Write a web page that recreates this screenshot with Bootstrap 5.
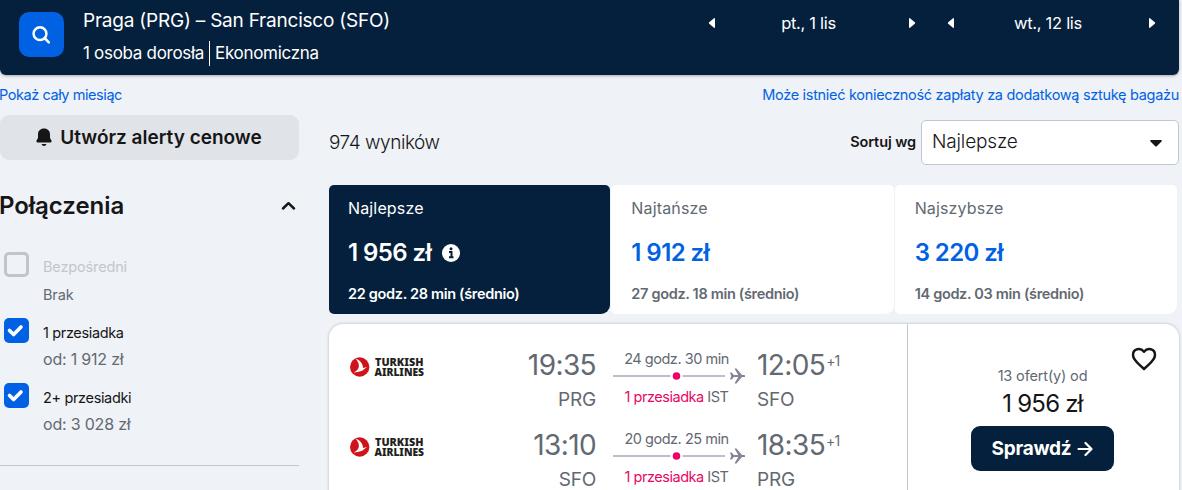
<!DOCTYPE html>
<html lang="pl">
<head>
    <meta charset="UTF-8">
    <meta name="viewport" content="width=device-width, initial-scale=1.0">
    <title>Praga – San Francisco</title>
    <link href="https://cdn.jsdelivr.net/npm/bootstrap@5.3.0/dist/css/bootstrap.min.css" rel="stylesheet">
    <style>
        body {
            background: #eff2f7;
            color: #161616;
            font-family: Inter, 'Liberation Sans', sans-serif;
            overflow: hidden;
        }
        .page {
            width: 1179px;
        }
        svg {
            display: block;
            flex-shrink: 0;
        }
        .line {
            white-space: nowrap;
            line-height: 20px;
        }
        .grey { color: #626971; }
        .blue { color: #0062e3; }

        /* Header */
        .search-bar {
            height: 75px;
            background: #05203c;
            border-radius: 0 0 6px 6px;
            padding: 0 23px 0 19px;
            box-shadow: 0 1px 3px rgba(37, 32, 31, .35);
        }
        .search-btn {
            width: 45px;
            height: 45px;
            margin-top: 12px;
            background: #0062e3;
            border-radius: 10px;
        }
        .search-text { margin-left: 19px; }
        .route { font-size: 19px; letter-spacing: -.22px; margin-top: 11px; }
        .pax { font-size: 17px; letter-spacing: -.3px; height: 26px; line-height: 26px; margin-top: 9px; }
        .pax-sep { width: 1px; height: 25px; background: #fff; margin: 0 5px; }
        .date-nav { width: 208px; height: 22px; margin-top: 12px; font-size: 16.5px; letter-spacing: -.3px; }
        .date-nav .line { margin-right: 7px; }
        .date-nav + .date-nav { width: 209px; margin-left: 31px; }

        .link-row { height: 40px; font-size: 14.5px; letter-spacing: -.3px; }
        .link-month { margin-left: -1px; letter-spacing: -.43px; }

        /* Filters */
        .side { width: 299px; margin-right: 30px; }
        .alert-btn {
            height: 45px;
            padding-right: 1px;
            background: #e0e3e8;
            border-radius: 9px;
            font-size: 19px;
            font-weight: 600;
        }
        .side-title { height: 28px; margin: 32px 0 0 -1px; padding-right: 3px; font-size: 24px; font-weight: 600; letter-spacing: -.05px; }
        .opt { gap: 14px; padding-left: 4px; font-size: 14.5px; letter-spacing: -.35px; }
        .opt + .opt { margin-top: 13px; }
        .opt-text { padding: 5px 0 1px; }
        .box { width: 25px; height: 25px; border-radius: 5px; flex-shrink: 0; }
        .box-off { border: 3px solid #c1c4c9; }
        .box-on { background: #0062e3; }
        .off-text { color: #c1c7cf; }
        .opt-text .off-text, .opt-text .mt-2 { letter-spacing: -.15px; }
        .opt-text .from { font-size: 16px; margin-top: 6px; letter-spacing: -.2px; }
        .side-end { height: 1px; background: #c1c7cf; margin-top: 30px; }

        /* Results */
        .results { width: 850px; }
        .sort-row { padding-top: 5px; }
        .count { font-size: 19px; font-weight: 350; letter-spacing: -.45px; }
        .sort-label { font-size: 14.5px; font-weight: 600; letter-spacing: -.1px; padding-bottom: 2px; }
        .sort-select {
            width: 258px;
            height: 45px;
            margin-left: 5px;
            padding: 0 15px 2px 10px;
            border: 1px solid #c1c7cf;
            border-radius: 5px;
            font-size: 19px;
            font-weight: 350;
            letter-spacing: -.15px;
        }
        .tabs { height: 129px; margin-top: 20px; gap: 1px; padding-right: 2px; }
        .tab { flex: 1 1 0; min-width: 0; padding: 13px 0 0 20px; background: #fff; border-radius: 5px 5px 9px 5px; }
        .tab-on { padding-left: 19px; background: #05203c; color: #fff; }
        .tab-name { font-size: 16px; letter-spacing: .15px; }
        .tab-price { font-size: 24px; font-weight: 600; line-height: 28px; margin-top: 21px; gap: 11px; letter-spacing: -.58px; }
        .tab-price svg { margin-top: -1px; }
        .tab-time { font-size: 14.5px; font-weight: 600; margin-top: 17px; letter-spacing: -.32px; }

        .ticket { height: 190px; margin-top: 10px; background: #fff; border-radius: 14px 14px 0 0; box-shadow: 0 0 3px rgba(37, 32, 31, .3); }
        .legs { width: 579px; border-right: 1px solid #c1c7cf; padding: 20px 0 0 21px; }
        .leg { height: 80px; }
        .logo { width: 75px; margin-top: 12px; overflow: visible; }
        .end-col { width: 108px; margin-left: 63px; text-align: right; }
        .arr-col { margin-left: 12px; }
        .hour { font-size: 28px; font-weight: 400; line-height: 40px; margin-top: 1px; letter-spacing: -.6px; }
        .code { font-size: 19px; font-weight: 400; line-height: 28px; margin-top: 1px; letter-spacing: -.2px; }
        .plus { font-size: 14px; line-height: 20px; margin: 7px 0 0 1px; letter-spacing: -.9px; }
        .path-col { width: 132px; margin-left: 17px; font-size: 14.5px; letter-spacing: -.48px; padding-top: 5px; }
        .path-text { width: 127px; text-align: center; }
        .path-col svg { margin: -1px 0 3px; }
        .stops { color: #e70866; }
        .deal { flex: 1; padding: 20px 2px 0 0; }
        .heart { margin: 3px 20px -5px auto; }
        .offers { font-size: 14.5px; letter-spacing: -.15px; }
        .price { font-size: 24px; font-weight: 400; line-height: 30px; margin-top: 3px; letter-spacing: -.8px; }
        .go-btn { width: 143px; height: 45px; margin-top: 7px; padding-top: 1px; background: #05203c; border-radius: 9px; font-size: 19px; font-weight: 700; gap: 6px; letter-spacing: -.25px; }
    </style>
</head>
<body>
    <svg width="0" height="0" class="position-absolute">
        <symbol id="left" viewBox="0 0 8 12"><path d="M6 1.200 1.200 5.200q-.8.8 0 1.600L6 10.800q1 .6 1-.6V1.800Q7 .6 6 1.200z" fill="#fff"/></symbol>
        <symbol id="right" viewBox="0 0 8 12"><path d="M2 1.200 6.800 5.200q.8.8 0 1.600L2 10.800q-1 .6-1-.6V1.800Q1 .6 2 1.200z" fill="#fff"/></symbol>
        <symbol id="check" viewBox="0 0 25 25"><path d="M5.500 12.500 9.600 16.600 17 9" fill="none" stroke="#fff" stroke-width="3.600" stroke-linecap="round" stroke-linejoin="round"/></symbol>
        <symbol id="bird" viewBox="0 0 20 22">
            <circle cx="9.700" cy="11" r="9.700" fill="#d0131b"/>
            <path d="M5.500 2.500c4.500 1.800 7.500 5 7.500 9.500l4-1-4.500 3.500c-2 1.200-5.500 1.500-9 2 3.500-1.500 5.300-3.500 5.400-6.500.1-2.800-1.400-5-3.400-7.500z" fill="#fff"/>
        </symbol>
        <symbol id="route" viewBox="0 0 132 16">
            <path d="M0 8h57.500M69.500 8H112" stroke="#bcbfc9" stroke-width="2"/>
            <circle cx="63.500" cy="8" r="3.800" fill="#e70866"/>
            <path d="M117 4.500h1.500L121 7h4.200L121.500.5h2L129 7h2q1.600.2 1.600 1T131 9h-2l-5.500 6.500h-2L125.200 9H121l-2.500 2.500H117L118.200 8z" fill="#8a8396"/>
        </symbol>
    </svg>

    <div class="page">
        <header class="search-bar d-flex text-white">
            <div class="search-btn d-flex align-items-center justify-content-center">
                <svg width="20" height="20" viewBox="0 0 20 20" fill="none" stroke="#fff" stroke-width="2.500" stroke-linecap="round"><circle cx="8" cy="8.700" r="6.400"/><path d="m13 13.500 3.800 3.800"/></svg>
            </div>
            <div class="search-text">
                <div class="route line">Praga (PRG) – San Francisco (SFO)</div>
                <div class="pax line d-flex align-items-center"><span>1 osoba dorosła</span><span class="pax-sep"></span><span>Ekonomiczna</span></div>
            </div>
            <div class="ms-auto d-flex">
                <div class="date-nav d-flex align-items-center justify-content-between">
                    <svg width="8" height="12"><use href="#left"/></svg>
                    <span class="line">pt., 1 lis</span>
                    <svg width="8" height="12"><use href="#right"/></svg>
                </div>
                <div class="date-nav d-flex align-items-center justify-content-between">
                    <svg width="8" height="12"><use href="#left"/></svg>
                    <span class="line">wt., 12 lis</span>
                    <svg width="8" height="12"><use href="#right"/></svg>
                </div>
            </div>
        </header>

        <div class="link-row line blue d-flex align-items-center justify-content-between">
            <span class="link-month">Pokaż cały miesiąc</span>
            <span>Może istnieć konieczność zapłaty za dodatkową sztukę bagażu</span>
        </div>

        <div class="d-flex">
            <aside class="side">
                <div class="alert-btn line d-flex align-items-center justify-content-center">
                    <svg class="me-2" width="16" height="19" viewBox="0 0 16 19" fill="#161616"><path d="M8 .5C4.300.5 2 3 2 6.500V10L.5 12.500Q0 14.500 1.500 14.500h13q1.500 0 1-2L14 10V6.500C14 3 11.700.5 8 .5zM5.500 16h5q-.5 2-2.500 2t-2.500-2z"/></svg>
                    <span>Utwórz alerty cenowe</span>
                </div>
                <div class="side-title line d-flex align-items-center justify-content-between">
                    <span>Połączenia</span>
                    <svg width="15" height="10" viewBox="0 0 15 10" fill="none" stroke="#161616" stroke-width="2.500" stroke-linecap="round" stroke-linejoin="round"><path d="m2 7.500 5.500-5.300L13 7.500"/></svg>
                </div>
                <div class="opt d-flex pt-2 mt-4">
                    <div class="box box-off"></div>
                    <div class="opt-text pb-0">
                        <div class="line off-text">Bezpośredni</div>
                        <div class="line grey mt-2">Brak</div>
                    </div>
                </div>
                <div class="opt d-flex">
                    <div class="box box-on"><svg width="25" height="25"><use href="#check"/></svg></div>
                    <div class="opt-text">
                        <div class="line">1 przesiadka</div>
                        <div class="line grey from">od: 1 912 zł</div>
                    </div>
                </div>
                <div class="opt d-flex">
                    <div class="box box-on"><svg width="25" height="25"><use href="#check"/></svg></div>
                    <div class="opt-text">
                        <div class="line">2+ przesiadki</div>
                        <div class="line grey from">od: 3 028 zł</div>
                    </div>
                </div>
                <div class="side-end"></div>
            </aside>

            <main class="results">
                <div class="sort-row d-flex align-items-center">
                    <span class="count line me-auto">974 wyników</span>
                    <span class="sort-label line">Sortuj wg</span>
                    <div class="sort-select line bg-white d-flex align-items-center justify-content-between">
                        <span>Najlepsze</span>
                        <svg class="mt-1" width="14" height="9" viewBox="0 0 14 9"><path d="M2 1h10q1.500.3.500 1.500L8 7q-1 1-2 0L1.500 2.500Q.5 1.300 2 1z" fill="#161616"/></svg>
                    </div>
                </div>

                <div class="tabs d-flex">
                    <div class="tab tab-on">
                        <div class="tab-name line">Najlepsze</div>
                        <div class="tab-price line d-flex align-items-center">
                            <span>1 956 zł</span>
                            <svg width="18" height="18" viewBox="0 0 18 18"><circle cx="9" cy="9" r="9" fill="#fff"/><circle cx="9" cy="4.800" r="1.500" fill="#05203c"/><path d="M7 8h2.500v5M7 13.200h4.500" stroke="#05203c" stroke-width="2" fill="none"/></svg>
                        </div>
                        <div class="tab-time line">22 godz. 28 min (średnio)</div>
                    </div>
                    <div class="tab">
                        <div class="tab-name line grey">Najtańsze</div>
                        <div class="tab-price line blue">1 912 zł</div>
                        <div class="tab-time line grey">27 godz. 18 min (średnio)</div>
                    </div>
                    <div class="tab">
                        <div class="tab-name line grey">Najszybsze</div>
                        <div class="tab-price line blue">3 220 zł</div>
                        <div class="tab-time line grey">14 godz. 03 min (średnio)</div>
                    </div>
                </div>

                <div class="ticket d-flex">
                    <div class="legs grey">
                        <div class="leg d-flex">
                            <svg class="logo" height="24" viewBox="0 0 75 24">
                                <use href="#bird" width="20" height="22"/>
                                <g font-family="'Noto Sans', sans-serif" font-size="10.500" font-weight="900" fill="#231f20">
                                    <text x="25" y="9.800" textLength="48.500" lengthAdjust="spacingAndGlyphs">TURKISH</text>
                                    <text x="24.500" y="20.300" textLength="49.500" lengthAdjust="spacingAndGlyphs">AIRLINES</text>
                                </g>
                            </svg>
                            <div class="end-col">
                                <div class="hour line">19:35</div>
                                <div class="code line">PRG</div>
                            </div>
                            <div class="path-col">
                                <div class="path-text line">24 godz. 30 min</div>
                                <svg width="132" height="16"><use href="#route"/></svg>
                                <div class="path-text line"><span class="stops">1 przesiadka</span> IST</div>
                            </div>
                            <div class="arr-col">
                                <div class="d-flex"><span class="hour line">12:05</span><span class="plus">+1</span></div>
                                <div class="code line">SFO</div>
                            </div>
                        </div>
                        <div class="leg d-flex">
                            <svg class="logo" height="24" viewBox="0 0 75 24">
                                <use href="#bird" width="20" height="22"/>
                                <g font-family="'Noto Sans', sans-serif" font-size="10.500" font-weight="900" fill="#231f20">
                                    <text x="25" y="9.800" textLength="48.500" lengthAdjust="spacingAndGlyphs">TURKISH</text>
                                    <text x="24.500" y="20.300" textLength="49.500" lengthAdjust="spacingAndGlyphs">AIRLINES</text>
                                </g>
                            </svg>
                            <div class="end-col">
                                <div class="hour line">13:10</div>
                                <div class="code line">SFO</div>
                            </div>
                            <div class="path-col">
                                <div class="path-text line">20 godz. 25 min</div>
                                <svg width="132" height="16"><use href="#route"/></svg>
                                <div class="path-text line"><span class="stops">1 przesiadka</span> IST</div>
                            </div>
                            <div class="arr-col">
                                <div class="d-flex"><span class="hour line">18:35</span><span class="plus">+1</span></div>
                                <div class="code line">PRG</div>
                            </div>
                        </div>
                    </div>
                    <div class="deal d-flex flex-column align-items-center">
                        <svg class="heart" width="26" height="24" viewBox="0 0 26 24"><path d="M13 4.800C9.500.3 2 1.500 2 8c0 5.500 6.500 9.500 11 14 4.500-4.500 11-8.500 11-14 0-6.500-7.500-7.700-11-3.200z" fill="none" stroke="#161616" stroke-width="2.500" stroke-linejoin="round"/></svg>
                        <div class="offers line grey">13 ofert(y) od</div>
                        <div class="price line">1 956 zł</div>
                        <div class="go-btn line text-white d-flex align-items-center justify-content-center">
                            <span>Sprawdź</span>
                            <svg width="16" height="16" viewBox="0 0 16 16" fill="none" stroke="#fff" stroke-width="2.200" stroke-linecap="round" stroke-linejoin="round"><path d="M1.500 8h13M8.500 2l6 6-6 6"/></svg>
                        </div>
                    </div>
                </div>
            </main>
        </div>
    </div>
    <script src="https://cdn.jsdelivr.net/npm/bootstrap@5.3.0/dist/js/bootstrap.bundle.min.js"></script>
</body>
</html>
